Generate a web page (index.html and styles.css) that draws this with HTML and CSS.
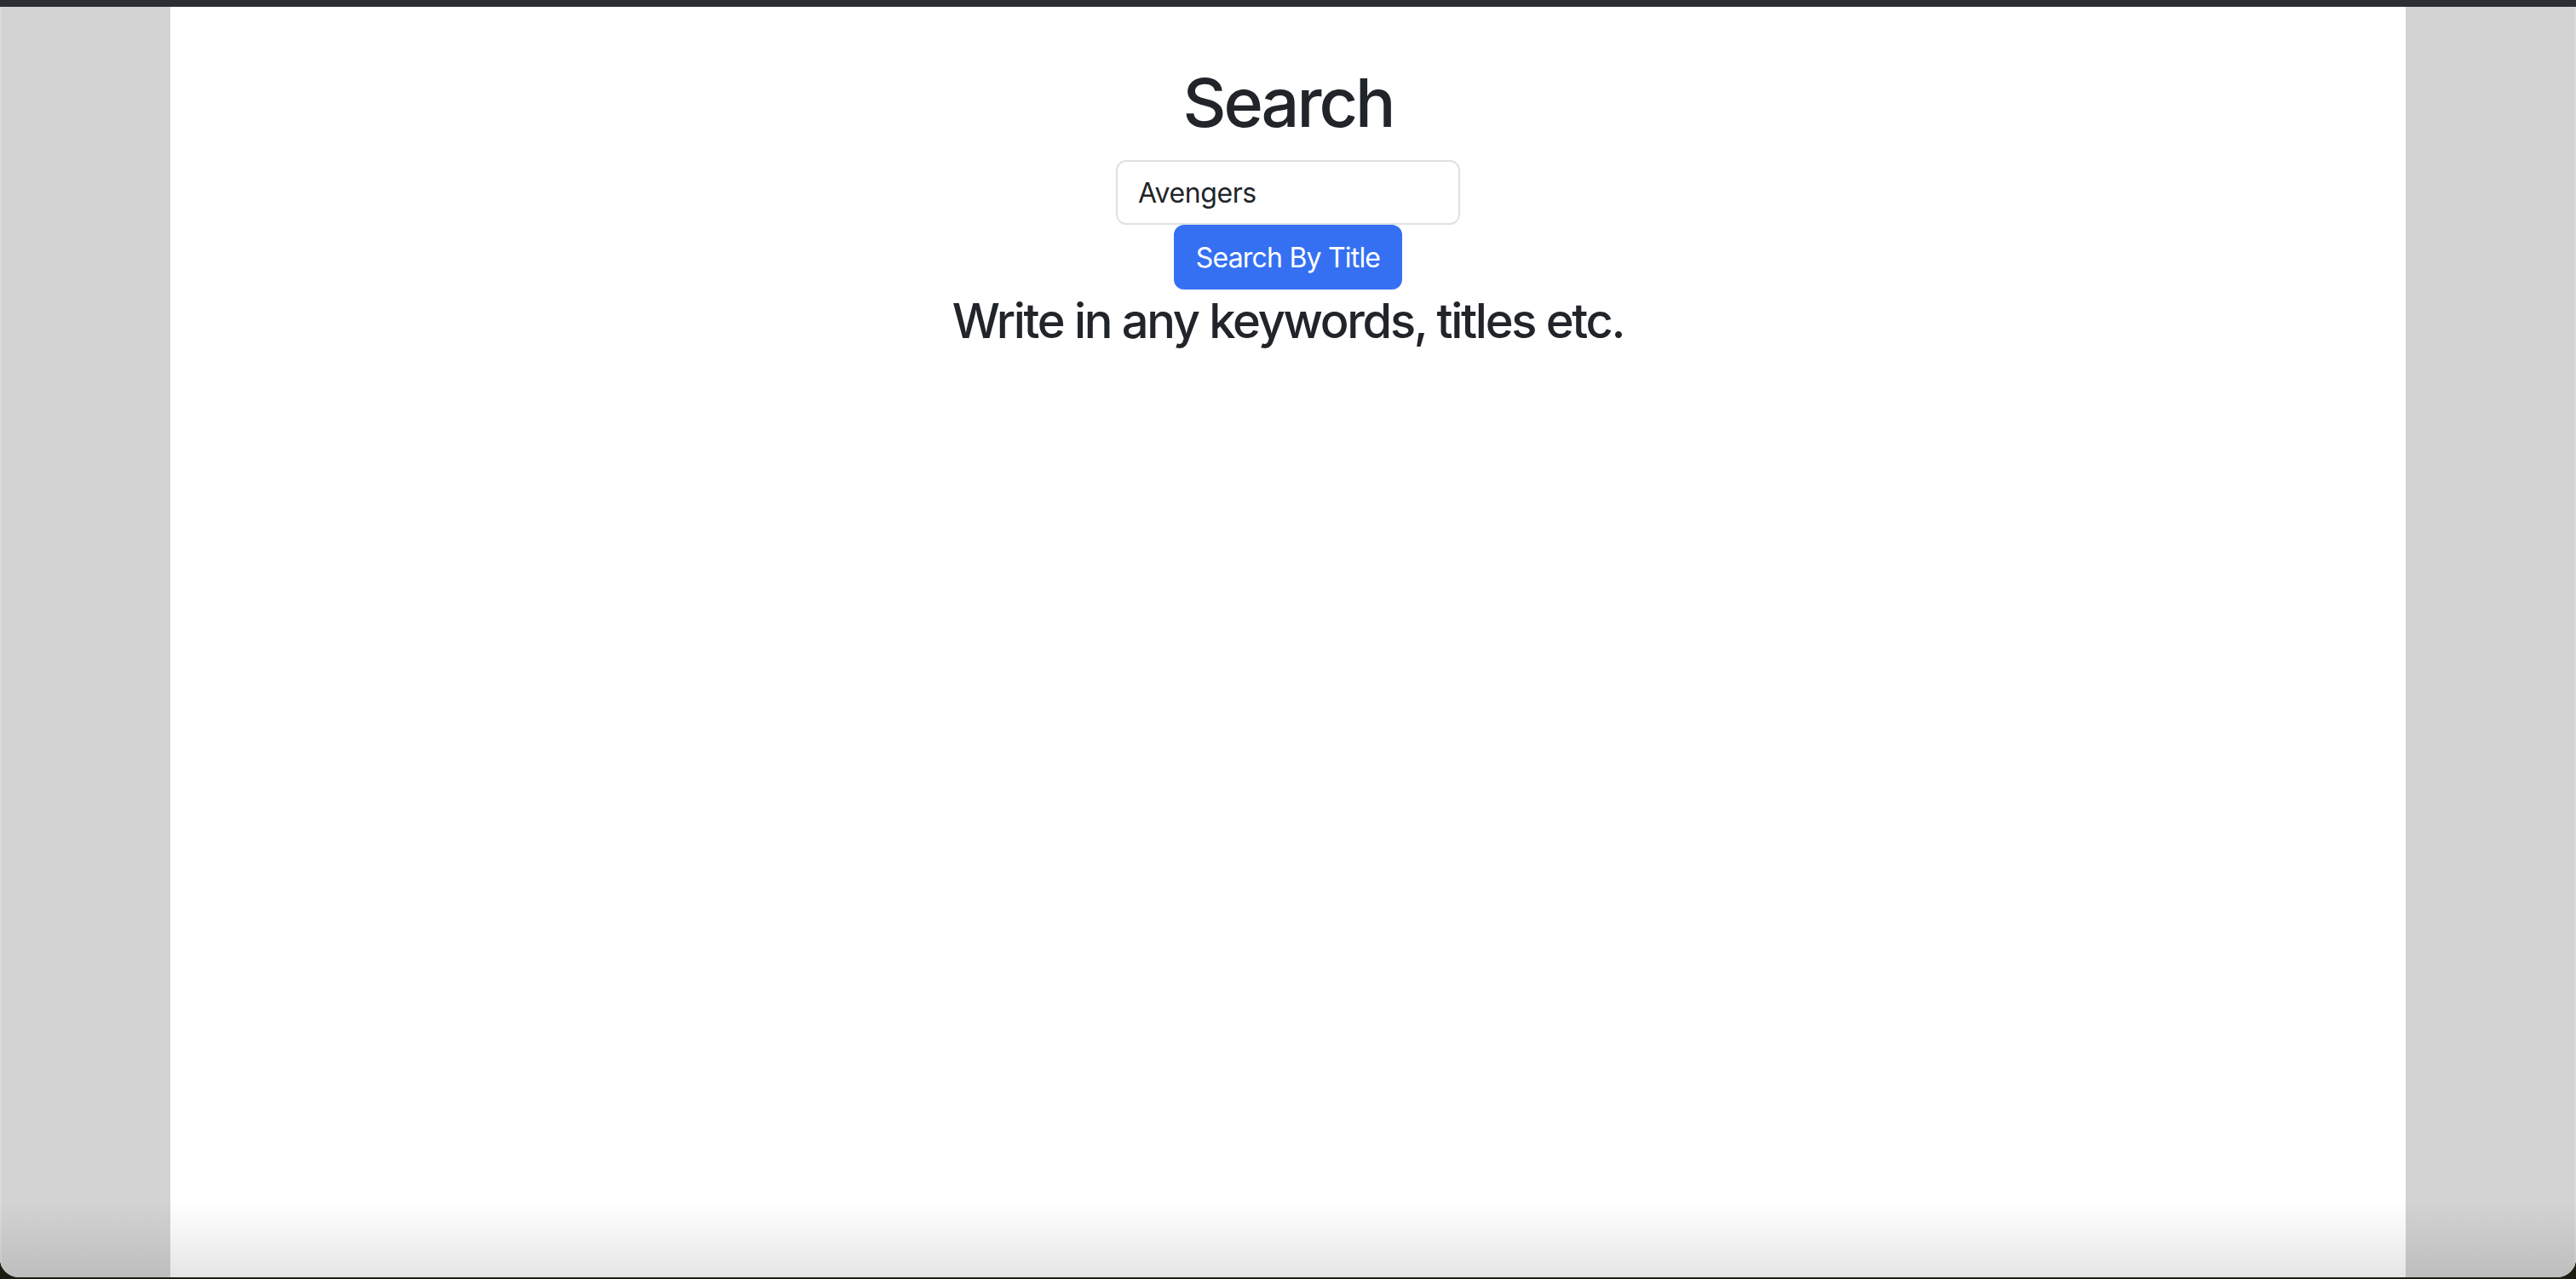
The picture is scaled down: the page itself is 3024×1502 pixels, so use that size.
FILE: index.html
```html
<!DOCTYPE html>
<html lang="en">
<head>
<meta charset="utf-8">
<title>Search</title>
<link rel="stylesheet" href="styles.css">
</head>
<body>
<div class="window">
  <div class="topbar"></div>
  <div class="frame">
    <div class="side side-left"></div>
    <main class="content">
      <h1 class="title">Search</h1>
      <input class="search-input" type="text" value="Avengers">
      <button class="search-btn" type="button">Search By Title</button>
      <h3 class="hint">Write in any keywords, titles etc.</h3>
    </main>
    <div class="side side-right"></div>
  </div>
  <div class="bottom-shade"></div>
</div>
</body>
</html>
```
FILE: styles.css
```css
html, body {
  margin: 0;
  padding: 0;
  background: #1d1c12;
  height: 1502px;
  overflow: hidden;
}
.window {
  position: relative;
  height: 1500px;
  background: #d3d3d3;
  border-radius: 0 0 22px 22px;
  overflow: hidden;
  display: flex;
  flex-direction: column;
  font-family: Inter, "Liberation Sans", sans-serif;
  color: #212529;
}
.topbar {
  height: 8px;
  background: #2b2f34;
  flex: none;
}
.frame {
  flex: 1;
  display: flex;
}
.side {
  width: 200px;
  flex: none;
  background: #d3d3d3;
}
.side-left {
  border-left: 2px solid #dadada;
  box-sizing: border-box;
}
.side-right {
  border-right: 2px solid #dadada;
  box-sizing: border-box;
}
.content {
  flex: 1;
  background: #ffffff;
  display: flex;
  flex-direction: column;
  align-items: center;
}
.title {
  margin: 64px 0 20px;
  font-size: 79px;
  font-weight: 500;
  line-height: 96px;
  letter-spacing: -3px;
}
.search-input {
  box-sizing: border-box;
  width: 404px;
  height: 76px;
  margin: 0;
  padding: 0 24px;
  border: 2px solid #dee2e6;
  border-radius: 12px;
  font-family: Inter, "Liberation Sans", sans-serif;
  font-size: 32px;
  letter-spacing: -0.4px;
  color: #212529;
  background: #fff;
  outline: none;
}
.search-btn {
  box-sizing: border-box;
  height: 76px;
  margin: 0;
  padding: 0 26px;
  border: none;
  border-radius: 12px;
  background: #3570f3;
  color: #ffffff;
  font-family: Inter, "Liberation Sans", sans-serif;
  font-size: 32px;
  letter-spacing: -0.8px;
}
.hint {
  margin: 4px 0 0;
  font-size: 56px;
  font-weight: 500;
  line-height: 67px;
  letter-spacing: -2.3px;
}
.bottom-shade {
  position: absolute;
  left: 0;
  right: 0;
  bottom: 0;
  height: 90px;
  background: linear-gradient(rgba(0,0,0,0), rgba(0,0,0,0.1));
  pointer-events: none;
}
```
